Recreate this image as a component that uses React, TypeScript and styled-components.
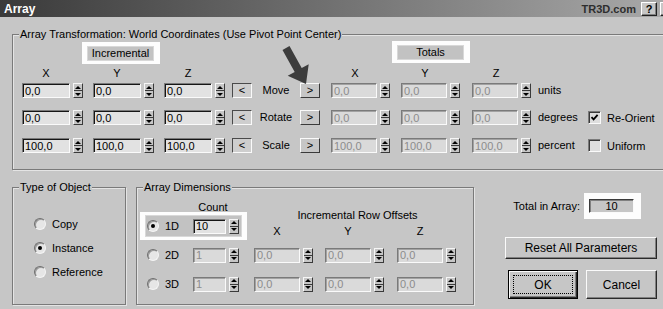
import React from "react";
import styled, { createGlobalStyle } from "styled-components";

const FACE = "#c6c6c6";

const GlobalStyle = createGlobalStyle`
  html, body {
    margin: 0;
    padding: 0;
    overflow: hidden;
    background: ${FACE};
  }
  body {
    font-family: "Liberation Sans", Arial, sans-serif;
    font-size: 11px;
    color: #000;
  }
  * {
    box-sizing: border-box;
  }
`;

const Dialog = styled.div`
  position: relative;
  width: 680px;
  height: 309px;
  background: ${FACE};
  display: flex;
  flex-direction: column;
`;

const TitleBar = styled.div`
  flex: 0 0 17px;
  display: flex;
  align-items: center;
  padding: 0 4px;
  background: linear-gradient(to right, #3a3a3a 0px, #a8a8a8 663px, #ababab 680px);
`;

const Caption = styled.span`
  flex: 1;
  font-weight: bold;
  font-size: 12px;
  color: #fff;
`;

const Brand = styled.span`
  margin-right: 5px;
  font-weight: bold;
  font-size: 11px;
  color: #2e2e2e;
`;

const CaptionButton = styled.span`
  width: 16px;
  height: 14px;
  display: flex;
  align-items: center;
  justify-content: center;
  background: ${FACE};
  border: 1px solid;
  border-color: #fff #202020 #202020 #fff;
  box-shadow: inset -1px -1px 0 #808080;
  font-weight: bold;
  font-size: 11px;
  & + & {
    margin-left: 3px;
  }
`;

const Body = styled.div`
  display: flex;
  flex-direction: column;
  padding: 17px 0 0 12px;
`;

const Group = styled.div<{ $w: number; $h: number }>`
  position: relative;
  width: ${(p) => p.$w}px;
  height: ${(p) => p.$h}px;
  border: 1px solid #7a7a7a;
  box-shadow: inset 1px 1px 0 #e4e4e4, 1px 1px 0 #e4e4e4;
`;

const Legend = styled.span`
  position: absolute;
  top: -8px;
  left: 6px;
  padding: 0 1px;
  background: ${FACE};
  line-height: 14px;
  white-space: nowrap;
`;

/* top group */
const TransformGrid = styled.div`
  display: grid;
  grid-template-columns: 71px 71px 68px 20px 48px 31px 70px 71px 66px 50px auto;
  grid-template-rows: 24px 19px 27px 28px 15px;
  align-items: start;
  padding: 5px 0 0 9px;
`;

const Highlight = styled.div<{ $on?: boolean }>`
  display: flex;
  background: ${(p) => (p.$on ? "#fdfdfd" : "transparent")};
`;

const TabSlot = styled(Highlight)<{ $col: number; $ml: number; $mt: number }>`
  grid-column: ${(p) => p.$col} / span 3;
  grid-row: 1;
  justify-self: start;
  margin: ${(p) => p.$mt}px 0 0 ${(p) => p.$ml}px;
  padding: 4px 6px 3px 5px;
`;

const Inset = styled.div`
  display: flex;
  align-items: center;
  background: #c2c2c2;
  border: 1px solid #d8d8d8;
`;

const TabLabel = styled(Inset)`
  width: 67px;
  height: 15px;
  justify-content: center;
  line-height: 13px;
`;

const ColHead = styled.span<{ $col: number }>`
  grid-column: ${(p) => p.$col};
  grid-row: 2;
  width: 48px;
  margin-top: 2px;
  text-align: center;
  line-height: 15px;
`;

const FieldWrap = styled.div`
  display: flex;
  gap: 3px;
  height: 15px;
`;

const ValueInput = styled.input<{ $w: number; $dim?: boolean }>`
  width: ${(p) => p.$w}px;
  height: 15px;
  margin: 0;
  padding: 0 0 0 2px;
  border: 1px solid;
  border-color: #7a7a7a #fafafa #fafafa #7a7a7a;
  box-shadow: inset 1px 1px 0 ${(p) => (p.$dim ? "#a2a2a2" : "#161616")};
  background: ${(p) => (p.$dim ? "#dadada" : "#e2e2e2")};
  color: ${(p) => (p.$dim ? "#8c8c8c" : "#000")};
  font: inherit;
  line-height: 13px;
  outline: none;
`;

const Spinner = styled.span`
  display: flex;
  flex-direction: column;
  width: 10px;
  height: 15px;
  border: 1px solid;
  border-color: #f6f6f6 #3a3a3a #3a3a3a #f6f6f6;
  background: ${FACE};
`;

const SpinHalf = styled.span<{ $down?: boolean }>`
  flex: 1;
  display: flex;
  align-items: center;
  justify-content: center;
  border-bottom: ${(p) => (p.$down ? "none" : "1px solid #3a3a3a")};
  &::after {
    content: "";
    border-left: 3px solid transparent;
    border-right: 3px solid transparent;
    ${(p) => (p.$down ? "border-top: 3px solid #000;" : "border-bottom: 3px solid #000;")}
  }
`;

const Cell = styled.div<{ $col: number; $row: number }>`
  grid-column: ${(p) => p.$col};
  grid-row: ${(p) => p.$row};
`;

const StepButton = styled.span<{ $pressed?: boolean }>`
  width: 20px;
  height: 15px;
  display: flex;
  align-items: center;
  justify-content: center;
  border: 1px solid;
  border-color: ${(p) => (p.$pressed ? "#4a4a4a #fafafa #fafafa #4a4a4a" : "#fafafa #3a3a3a #3a3a3a #fafafa")};
  background: ${(p) => (p.$pressed ? "#cecece" : FACE)};
  font-size: 11px;
  line-height: 1;
`;

const RowText = styled.span<{ $center?: boolean }>`
  display: block;
  line-height: 15px;
  white-space: nowrap;
  text-align: ${(p) => (p.$center ? "center" : "left")};
`;

const CheckRow = styled.label`
  display: flex;
  align-items: center;
  gap: 6px;
  height: 15px;
  white-space: nowrap;
`;

const CheckBox = styled.span`
  width: 13px;
  height: 13px;
  display: flex;
  align-items: center;
  justify-content: center;
  border: 1px solid;
  border-color: #7a7a7a #fafafa #fafafa #7a7a7a;
  box-shadow: inset 1px 1px 0 #3a3a3a;
  background: #dedede;
`;

/* lower part */
const Lower = styled.div`
  display: flex;
  align-items: flex-start;
  margin-top: 17px;
`;

const RadioList = styled.div`
  display: flex;
  flex-direction: column;
  padding: 24px 0 0 21px;
`;

const RadioRow = styled.div`
  display: flex;
  align-items: center;
  gap: 6px;
  height: 24px;
`;

const Radio = styled.span<{ $checked?: boolean }>`
  flex: 0 0 12px;
  width: 12px;
  height: 12px;
  display: flex;
  align-items: center;
  justify-content: center;
  border-radius: 50%;
  border: 1px solid;
  border-color: #6e6e6e #f4f4f4 #f4f4f4 #6e6e6e;
  background: #e6e6e6;
  box-shadow: inset 1px 1px 0 #9a9a9a;
  &::after {
    content: "";
    width: 4px;
    height: 4px;
    border-radius: 50%;
    background: ${(p) => (p.$checked ? "#000" : "transparent")};
  }
`;

const DimGrid = styled.div`
  display: grid;
  grid-template-columns: 53px 61px 71px 72px auto;
  grid-template-rows: 23px 28px 28px 28px;
  row-gap: 1px;
  padding-left: 3px;
  align-items: center;
`;

const CountHead = styled.span`
  grid-column: 2;
  grid-row: 1;
  align-self: end;
  width: 40px;
  margin-bottom: -3px;
  text-align: center;
  line-height: 13px;
`;

const OffsetTitle = styled.span`
  grid-column: 3 / 6;
  grid-row: 2;
  align-self: start;
  margin-top: -3px;
  padding-right: 12px;
  text-align: center;
  line-height: 13px;
  white-space: nowrap;
`;

const OffsetHead = styled.span<{ $col: number }>`
  grid-column: ${(p) => p.$col};
  grid-row: 2;
  align-self: end;
  width: 46px;
  margin-bottom: 2px;
  text-align: center;
  line-height: 13px;
`;

const DimSlot = styled(Highlight)<{ $row: number }>`
  grid-column: 1 / 3;
  grid-row: ${(p) => p.$row};
  justify-self: start;
  width: 107px;
  height: 28px;
  padding: 3px 5px;
`;

const DimChoice = styled.div<{ $on?: boolean }>`
  flex: 1;
  display: flex;
  align-items: center;
  background: ${(p) => (p.$on ? "#c2c2c2" : "transparent")};
  border: 1px solid ${(p) => (p.$on ? "#d8d8d8" : "transparent")};
  padding-left: 1px;
`;

const DimLabel = styled.span`
  width: 28px;
  margin-left: 6px;
  line-height: 13px;
`;

const SideColumn = styled.div`
  display: flex;
  flex-direction: column;
  width: 152px;
  margin-left: 31px;
`;

const TotalRow = styled.div`
  display: flex;
  align-items: center;
  justify-content: flex-end;
  gap: 4px;
  margin-top: 6px;
  padding-right: 16px;
  white-space: nowrap;
`;

const TotalSlot = styled(Highlight)`
  padding: 6px 7px 6px 5px;
`;

const TotalField = styled.span`
  width: 45px;
  height: 14px;
  display: flex;
  align-items: center;
  justify-content: center;
  border: 1px solid;
  border-color: #3a3a3a #fafafa #fafafa #3a3a3a;
  box-shadow: inset 1px 1px 0 #808080;
  background: ${FACE};
  line-height: 12px;
`;

const PushButton = styled.button<{ $w: number; $h: number; $default?: boolean }>`
  position: relative;
  width: ${(p) => p.$w}px;
  height: ${(p) => p.$h}px;
  margin: 0;
  padding: 0;
  background: ${FACE};
  color: #000;
  font: inherit;
  font-size: 12px;
  border: 1px solid;
  border-color: ${(p) => (p.$default ? "#000" : "#fafafa #2a2a2a #2a2a2a #fafafa")};
  box-shadow: ${(p) =>
    p.$default
      ? "inset 1px 1px 0 #fafafa, inset -1px -1px 0 #2a2a2a, inset -2px -2px 0 #808080"
      : "inset -1px -1px 0 #808080"};
  &::after {
    content: "";
    position: absolute;
    inset: 4px;
    border: 1px dotted ${(p) => (p.$default ? "#000" : "transparent")};
  }
`;

const ResetButton = styled(PushButton)`
  margin-top: 18px;
`;

const ButtonRow = styled.div`
  display: flex;
  gap: 8px;
  margin-top: 11px;
  padding-left: 3px;
`;

const Pointer = styled.svg`
  position: absolute;
  left: 280px;
  top: 42px;
`;

function Field({ value, w = 48, dim }: { value: string; w?: number; dim?: boolean }) {
  return (
    <FieldWrap>
      <ValueInput $w={w} $dim={dim} readOnly value={value} />
      <Spinner>
        <SpinHalf />
        <SpinHalf $down />
      </Spinner>
    </FieldWrap>
  );
}

const rows = [
  { label: "Move", value: "0,0", unit: "units" },
  { label: "Rotate", value: "0,0", unit: "degrees", check: "Re-Orient", checked: true },
  { label: "Scale", value: "100,0", unit: "percent", check: "Uniform", checked: false },
];

export default function App() {
  return (
    <Dialog>
      <GlobalStyle />
      <TitleBar>
        <Caption>Array</Caption>
        <Brand>TR3D.com</Brand>
        <CaptionButton>?</CaptionButton>
        <CaptionButton />
      </TitleBar>
      <Body>
        <Group $w={656} $h={136}>
          <Legend>Array Transformation: World Coordinates (Use Pivot Point Center)</Legend>
          <TransformGrid>
            <TabSlot $on $col={1} $ml={60} $mt={2}>
              <TabLabel>Incremental</TabLabel>
            </TabSlot>
            <TabSlot $on $col={7} $ml={61} $mt={1}>
              <TabLabel>Totals</TabLabel>
            </TabSlot>
            {["X", "Y", "Z"].map((a, i) => (
              <ColHead key={a} $col={i + 1}>{a}</ColHead>
            ))}
            {["X", "Y", "Z"].map((a, i) => (
              <ColHead key={"t" + a} $col={i + 7}>{a}</ColHead>
            ))}
            {rows.map((r, ri) => (
              <React.Fragment key={r.label}>
                {[1, 2, 3].map((c) => (
                  <Cell key={c} $col={c} $row={ri + 3}>
                    <Field value={r.value} />
                  </Cell>
                ))}
                <Cell $col={4} $row={ri + 3}>
                  <StepButton $pressed>&lt;</StepButton>
                </Cell>
                <Cell $col={5} $row={ri + 3}>
                  <RowText $center>{r.label}</RowText>
                </Cell>
                <Cell $col={6} $row={ri + 3}>
                  <StepButton>&gt;</StepButton>
                </Cell>
                {[7, 8, 9].map((c) => (
                  <Cell key={c} $col={c} $row={ri + 3}>
                    <Field value={r.value} w={46} dim />
                  </Cell>
                ))}
                <Cell $col={10} $row={ri + 3}>
                  <RowText>{r.unit}</RowText>
                </Cell>
                {r.check && (
                  <Cell $col={11} $row={ri + 3}>
                    <CheckRow>
                      <CheckBox>
                        {r.checked && (
                          <svg width="9" height="9" viewBox="0 0 9 9">
                            <path d="M1.5 4.2 L3.6 6.4 L7.6 1.8" fill="none" stroke="#000" strokeWidth="1.8" />
                          </svg>
                        )}
                      </CheckBox>
                      {r.check}
                    </CheckRow>
                  </Cell>
                )}
              </React.Fragment>
            ))}
          </TransformGrid>
        </Group>

        <Lower>
          <Group $w={114} $h={118}>
            <Legend>Type of Object</Legend>
            <RadioList>
              <RadioRow><Radio />Copy</RadioRow>
              <RadioRow><Radio $checked />Instance</RadioRow>
              <RadioRow><Radio />Reference</RadioRow>
            </RadioList>
          </Group>

          <Group $w={338} $h={118} style={{ marginLeft: 10 }}>
            <Legend>Array Dimensions</Legend>
            <DimGrid>
              <CountHead>Count</CountHead>
              <OffsetTitle>Incremental Row Offsets</OffsetTitle>
              {["X", "Y", "Z"].map((a, i) => (
                <OffsetHead key={a} $col={i + 3}>{a}</OffsetHead>
              ))}
              {["1D", "2D", "3D"].map((d, i) => (
                <React.Fragment key={d}>
                  <DimSlot $on={i === 0} $row={i + 2}>
                    <DimChoice $on={i === 0}>
                      <Radio $checked={i === 0} />
                      <DimLabel>{d}</DimLabel>
                      <Field value={i === 0 ? "10" : "1"} w={33} dim={i !== 0} />
                    </DimChoice>
                  </DimSlot>
                  {i > 0 &&
                    [3, 4, 5].map((c) => (
                      <Cell key={c} $col={c} $row={i + 2}>
                        <Field value="0,0" w={46} dim />
                      </Cell>
                    ))}
                </React.Fragment>
              ))}
            </DimGrid>
          </Group>

          <SideColumn>
            <TotalRow>
              Total in Array:
              <TotalSlot $on>
                <TotalField>10</TotalField>
              </TotalSlot>
            </TotalRow>
            <ResetButton $w={152} $h={22}>Reset All Parameters</ResetButton>
            <ButtonRow>
              <PushButton $w={70} $h={29} $default>OK</PushButton>
              <PushButton $w={71} $h={29}>Cancel</PushButton>
            </ButtonRow>
          </SideColumn>
        </Lower>
      </Body>

      <Pointer width="32" height="45" viewBox="0 0 32 45">
        <polygon
          points="2.5,7.9 9.5,4.1 21.7,26.1 28.7,22.2 26,42 7.7,33.8 14.7,29.9"
          fill="#3c3c3c"
        />
      </Pointer>
    </Dialog>
  );
}
